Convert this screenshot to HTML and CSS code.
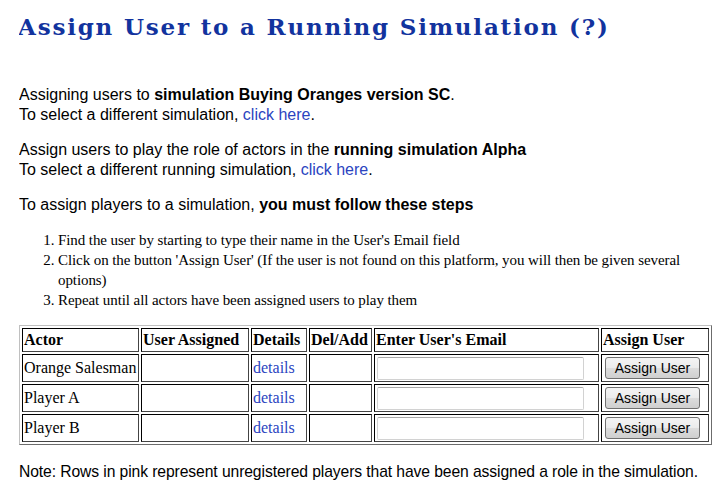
FILE: index.html
```html
<!DOCTYPE html>
<html>
<head>
<meta charset="utf-8">
<link rel="stylesheet" href="styles.css">
</head>
<body>
<h1 class="title">Assign User to a Running Simulation (?)</h1>
<p class="para">Assigning users to <b>simulation Buying Oranges version SC</b>.<br>
To select a different simulation, <a class="link" href="#">click here</a>.</p>
<p class="para">Assign users to play the role of actors in the <b>running simulation Alpha</b><br>
To select a different running simulation, <a class="link" href="#">click here</a>.</p>
<p class="para">To assign players to a simulation, <b>you must follow these steps</b></p>
<ol class="steps">
<li>Find the user by starting to type their name in the User's Email field</li>
<li>Click on the button 'Assign User' (If the user is not found on this platform, you will then be given several options)</li>
<li>Repeat until all actors have been assigned users to play them</li>
</ol>
<table class="grid">
<tr class="head"><th class="c-actor">Actor</th><th class="c-user">User Assigned</th><th class="c-det">Details</th><th class="c-del">Del/Add</th><th class="c-mail">Enter User's Email</th><th class="c-btn">Assign User</th></tr>
<tr><td>Orange Salesman</td><td></td><td><a class="link" href="#">details</a></td><td></td><td><input class="email" type="text"></td><td><button class="assign">Assign User</button></td></tr>
<tr><td>Player A</td><td></td><td><a class="link" href="#">details</a></td><td></td><td><input class="email" type="text"></td><td><button class="assign">Assign User</button></td></tr>
<tr><td>Player B</td><td></td><td><a class="link" href="#">details</a></td><td></td><td><input class="email" type="text"></td><td><button class="assign">Assign User</button></td></tr>
</table>
<p class="note">Note: Rows in pink represent unregistered players that have been assigned a role in the simulation.</p>
</body>
</html>
```
FILE: styles.css
```css
body {
  margin: 8px 6px 8px 19px;
  font-family: "Liberation Sans", Arial, sans-serif;
  font-size: 16px;
  color: #000;
  background: #fff;
}
.title {
  font-family: "DejaVu Serif", "Liberation Serif", serif;
  font-weight: bold;
  font-size: 23px;
  letter-spacing: 1.8px;
  color: #12339e;
  margin: 0 0 0 -1px;
  line-height: 38px;
}
.para {
  margin: 39px 0 0 0;
  line-height: 20px;
}
.para + .para {
  margin-top: 15px;
}
.link {
  color: #2b44bf;
  text-decoration: none;
}
.steps {
  font-family: "Liberation Serif", "Times New Roman", serif;
  font-size: 15px;
  letter-spacing: -0.08px;
  line-height: 20px;
  margin: 15px 0 0 0;
  padding-left: 39px;
}
.grid {
  margin-top: 15px;
  border: 1px outset #c0c0c0;
  border-spacing: 2px;
  font-family: "Liberation Serif", "Times New Roman", serif;
  font-size: 16px;
  width: 692px;
  table-layout: fixed;
}
.grid th, .grid td {
  box-sizing: border-box;
  border: 1px solid #000;
  border-right-color: #444;
  border-bottom-color: #444;
  padding: 1px;
  text-align: left;
  white-space: nowrap;
  height: 28px;
  vertical-align: middle;
}
.grid .head th { height: 24px; }
.c-actor { width: 117px; }
.c-user { width: 108px; }
.c-det { width: 56px; }
.c-del { width: 63px; }
.c-mail { width: 225px; }
.c-btn { width: 108px; }
.email {
  box-sizing: border-box;
  display: block;
  width: 207px;
  height: 23px;
  border: 1px solid #d2d2d2;
  border-top-color: #a9a9a9;
  border-radius: 2px;
  padding: 1px 2px;
  margin: 0 0 0 1px;
}
.assign {
  display: block;
  box-sizing: border-box;
  font-family: "Liberation Sans", Arial, sans-serif;
  font-size: 14px;
  width: 95px;
  height: 22px;
  padding: 0;
  margin: 0 0 0 2px;
  border: 1px solid #707070;
  border-radius: 3px;
  background: linear-gradient(#f4f4f4 0%, #ebebeb 50%, #dddddd 51%, #cfcfcf 100%);
  color: #000;
}
.note {
  margin: 17px 0 0 0;
  line-height: 20px;
  font-size: 15.7px;
  letter-spacing: -0.1px;
}
```
